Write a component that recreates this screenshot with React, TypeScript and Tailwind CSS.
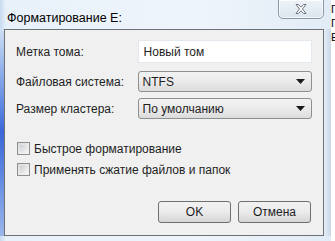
import React from 'react'

function CloseX() {
	return (
		<svg width="14" height="12" viewBox="0 0 14 12">
			<path
				d="M2 1.5 L4.5 1.5 L7 4.2 L9.5 1.5 L12 1.5 L8.5 6 L12 10.5 L9.5 10.5 L7 7.8 L4.5 10.5 L2 10.5 L5.5 6 Z"
				fill="#ffffff"
				stroke="#6b7480"
				strokeWidth="1"
				strokeLinejoin="round"
			/>
		</svg>
	)
}

function Arrow() {
	return (
		<svg width="9" height="5" viewBox="0 0 9 5">
			<path d="M0 0 L9 0 L4.5 5 Z" fill="#1a1a1a" />
		</svg>
	)
}

function Select({ value }: { value: string }) {
	return (
		<div className="flex items-center justify-between w-[175px] h-[21px] rounded-[3px] border border-[#8e8f8f] bg-gradient-to-b from-[#f2f2f2] via-[#ebebeb] to-[#dcdcdc] pl-[4px] pr-[6px]">
			<span className="text-[12px] text-[#1e1e1e]">{value}</span>
			<Arrow />
		</div>
	)
}

function Check({ label }: { label: string }) {
	return (
		<div className="flex items-center gap-[4px] h-[13px]">
			<div className="w-[13px] h-[13px] border border-[#8f8f8f] bg-gradient-to-br from-[#dcdcdc] to-[#f6f6f6] p-[2px]">
				<div className="w-full h-full bg-gradient-to-br from-[#cbcfd5] to-[#f3f3f3]" />
			</div>
			<span className="text-[12px] text-[#1e1e1e]">{label}</span>
		</div>
	)
}

function Button({ label }: { label: string }) {
	return (
		<div className="flex items-center justify-center w-[73px] h-[22px] rounded-[3px] border border-[#707070] bg-gradient-to-b from-[#f2f2f2] via-[#ebebeb] to-[#d6d6d6] text-[12px] text-[#1e1e1e]">
			{label}
		</div>
	)
}

export default function App() {
	return (
		<div
			className="w-[335px] h-[241px] overflow-hidden flex bg-gradient-to-b from-[#e4eef8] via-[#dce8f4] to-[#e2edf7]"
			style={{ fontFamily: '"Liberation Sans", Arial, sans-serif' }}
		>
			<div className="w-[331px] flex flex-col bg-[linear-gradient(90deg,#c6daf0_0px,#e8f1fa_6px,#eef4fb_60%,#e2ecf6_100%)]">
				<div className="h-[29px] flex justify-between">
					<span className="pl-[7px] pt-[9px] text-[12.5px] text-black">Форматирование E:</span>
					<div className="mr-[7px] w-[46px] h-[20px] mt-[-1px] rounded-b-[5px] border border-[#8a97a6] bg-gradient-to-b from-[#eef3f8] to-[#dbe5ef] flex items-center justify-center shadow-[inset_0_0_0_1px_rgba(255,255,255,0.7)]">
						<CloseX />
					</div>
				</div>
				<div className="flex">
					<div className="w-[4px] h-[207px] bg-gradient-to-b from-[#cfe0f2] via-[#3a66d8] to-[#9ab6ea]" />
					<div className="w-[320px] h-[207px] border border-[#6d7278] bg-[#f0f0f0] flex flex-col pl-[11px] pr-[11px] pt-[10px]">
						<div className="flex items-center h-[23px]">
							<span className="w-[122px] text-[12px] text-[#1e1e1e]">Метка тома:</span>
							<div className="w-[175px] h-[23px] bg-white border border-[#e3e9ef] flex items-center pl-[5px] text-[12px] text-[#1e1e1e]">
								Новый том
							</div>
						</div>
						<div className="flex items-center mt-[8px]">
							<span className="w-[122px] text-[12px] text-[#1e1e1e]">Файловая система:</span>
							<Select value="NTFS" />
						</div>
						<div className="flex items-center mt-[6px]">
							<span className="w-[122px] text-[12px] text-[#1e1e1e]">Размер кластера:</span>
							<Select value="По умолчанию" />
						</div>
						<div className="flex flex-col gap-[8px] mt-[23px] pl-[1px]">
							<Check label="Быстрое форматирование" />
							<Check label="Применять сжатие файлов и папок" />
						</div>
						<div className="flex justify-end gap-[7px] mt-[25px] pr-[1px]">
							<Button label="OK" />
							<Button label="Отмена" />
						</div>
					</div>
					<div className="w-[7px] h-[207px] bg-gradient-to-r from-[#e6eef7] to-[#c9d7e6]" />
				</div>
			</div>
			<div className="w-[4px] bg-white flex flex-col text-[11px] leading-[14px] text-black pt-[2px] overflow-hidden">
				<span>Г</span>
				<span>Г</span>
				<span>Е</span>
			</div>
		</div>
	)
}
